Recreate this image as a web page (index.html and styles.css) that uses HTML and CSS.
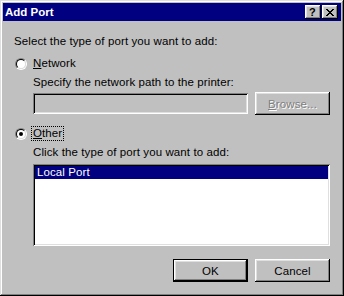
FILE: index.html
```html
<!DOCTYPE html>
<html>

<head>
    <link rel="stylesheet" href="styles.css">
</head>

<body>
    <div class="window">
        <div class="titlebar">
            <span class="title">Add Port</span>
            <span class="tbtn help">?</span>
            <span class="tbtn close">
                <svg width="8" height="7" viewBox="0 0 8 7">
                    <path d="M0 0h2v1h1v1h2v-1h1v-1h2v1h-1v1h-1v1h-1v1h1v1h1v1h1v1h-2v-1h-1v-1h-2v1h-1v1h-2v-1h1v-1h1v-1h1v-1h-1v-1h-1v-1h-1z" fill="#000"/>
                </svg>
            </span>
        </div>

        <div class="content">
            <p class="line">Select the type of port you want to add:</p>

            <div class="radio-row network">
                <span class="radio"></span>
                <span class="label"><u>N</u>etwork</span>
            </div>

            <div class="indent">
                <p class="line specify">Specify the network path to the printer:</p>
                <div class="path-row">
                    <div class="textbox"></div>
                    <div class="button disabled"><span><u>B</u>rowse...</span></div>
                </div>
            </div>

            <div class="radio-row other">
                <span class="radio checked"></span>
                <span class="label focus"><u>O</u>ther</span>
            </div>

            <div class="indent">
                <p class="line click">Click the type of port you want to add:</p>
                <div class="listbox">
                    <div class="item selected">Local Port</div>
                </div>
            </div>

            <div class="actions">
                <div class="button default">OK</div>
                <div class="button">Cancel</div>
            </div>
        </div>
    </div>
</body>

</html>
```

FILE: styles.css
```css
body {
    margin: 0;
    background: #c0c0c0;
    font-family: 'Liberation Sans', Arial, sans-serif;
    font-size: 11.5px;
    letter-spacing: 0.1px;
    color: #000;
}

.window {
    width: 344px;
    height: 296px;
    box-sizing: border-box;
    padding: 3px;
    background: #c0c0c0;
    box-shadow: inset -1px -1px #000, inset 1px 1px #dfdfdf,
        inset -2px -2px #808080, inset 2px 2px #fff;
}

.titlebar {
    height: 18px;
    background: #000080;
    display: flex;
    align-items: center;
    padding: 0 3px 0 2px;
}

.title {
    flex: 1;
    color: #fff;
    font-weight: bold;
    font-size: 11.5px;
    letter-spacing: 0;
}

.tbtn {
    width: 16px;
    height: 14px;
    box-sizing: border-box;
    background: #c0c0c0;
    box-shadow: inset -1px -1px #000, inset 1px 1px #fff,
        inset -2px -2px #808080, inset 2px 2px #dfdfdf;
    display: flex;
    align-items: center;
    justify-content: center;
    font-weight: bold;
    font-size: 11px;
    line-height: 14px;
}

.help {
    margin-right: 1px;
    padding-right: 1px;
}

.close svg {
    display: block;
    margin-left: -1px;
}

.content {
    padding: 14px 11px 0 11px;
}

.line {
    margin: 0;
    line-height: 13px;
    white-space: nowrap;
}

.radio-row {
    display: flex;
    align-items: center;
    height: 13px;
}

.network {
    margin-top: 9px;
}

.other {
    margin-top: 12px;
}

.radio {
    width: 12px;
    height: 12px;
    box-sizing: border-box;
    margin: 0 6px 0 1px;
    border-radius: 50%;
    border: 1px solid;
    border-color: #808080 #fff #fff #808080;
    position: relative;
}

.radio::before {
    content: "";
    position: absolute;
    inset: 0;
    border-radius: 50%;
    border: 1px solid;
    border-color: #000 #dfdfdf #dfdfdf #000;
    background: #fff;
}

.radio.checked::after {
    content: "";
    position: absolute;
    left: 3px;
    top: 3px;
    width: 4px;
    height: 4px;
    border-radius: 50%;
    background: #000;
}

.label {
    line-height: 13px;
}

.focus {
    outline: 1px dotted #000;
    outline-offset: 0;
    padding: 0 1px;
    margin-left: -1px;
}

.indent {
    margin-left: 19px;
}

.specify {
    margin-top: 6px;
}

.path-row {
    margin-top: 3px;
    height: 23px;
    display: flex;
    align-items: center;
    gap: 7px;
}

.textbox {
    flex: 1;
    height: 21px;
    box-sizing: border-box;
    background: #c0c0c0;
    box-shadow: inset 1px 1px #808080, inset -1px -1px #fff,
        inset 2px 2px #000, inset -2px -2px #dfdfdf;
}

.button {
    width: 75px;
    height: 23px;
    box-sizing: border-box;
    background: #c0c0c0;
    box-shadow: inset -1px -1px #000, inset 1px 1px #fff,
        inset -2px -2px #808080, inset 2px 2px #dfdfdf;
    display: flex;
    align-items: center;
    justify-content: center;
}

.button.disabled {
    color: #808080;
    text-shadow: 1px 1px #fff;
}

.button.default {
    border: 1px solid #000;
}

.click {
    margin-top: 6px;
}

.listbox {
    margin-top: 5px;
    height: 82px;
    box-sizing: border-box;
    padding: 2px;
    background: #fff;
    box-shadow: inset 1px 1px #808080, inset -1px -1px #fff,
        inset 2px 2px #000, inset -2px -2px #dfdfdf;
}

.item {
    height: 13px;
    line-height: 13px;
    padding-left: 2px;
}

.item.selected {
    background: #000080;
    color: #fff;
}

.actions {
    margin-top: 13px;
    display: flex;
    justify-content: flex-end;
    gap: 7px;
}
```
